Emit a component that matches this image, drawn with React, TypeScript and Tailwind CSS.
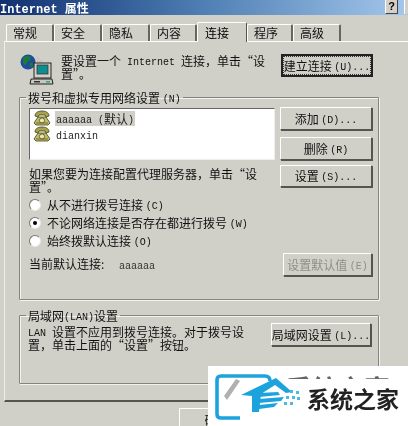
import React from "react";

const FONT = "[font-family:'Noto_Sans_CJK_SC','Liberation_Mono',monospace]";

function L({ children }: { children: React.ReactNode }) {
  return <span className="text-[10px] leading-[1px] align-[1px] [font-family:'Liberation_Mono',monospace]">{children}</span>;
}

function Tab({ label, w, active }: { label: string; w: string; active?: boolean }) {
  return (
    <div
      className={
        active
          ? `${w} h-[20px] mt-[1px] z-10 bg-[#d0d0c9] border-t border-l border-white border-r border-r-[#55554f] rounded-t-[2px] pl-[7px] pt-[3px] text-[12px] leading-[14px] text-black`
          : `${w} h-[17px] mt-[3px] bg-[#d0d0c9] border-t border-l border-white border-r-2 border-r-[#66665f] rounded-t-[2px] pl-[6px] pt-[1px] text-[12px] leading-[14px] text-[#111]`
      }
    >
      {label}
    </div>
  );
}

function Btn({
  children,
  className = "",
  dflt,
  disabled,
}: {
  children: React.ReactNode;
  className?: string;
  dflt?: boolean;
  disabled?: boolean;
}) {
  const raised =
    "border border-t-white border-l-white border-r-[#55554f] border-b-[#55554f] shadow-[1px_1px_0_#55554f]";
  return (
    <div
      className={`${className} flex items-center justify-center whitespace-nowrap text-[12px] leading-[14px] ${
        dflt ? "border-2 border-[#222]" : raised
      } ${disabled ? "text-[#8f8f88]" : "text-[#111]"} bg-[#d0d0c9]`}
    >
      {dflt ? (
        <div className="m-[1px] w-full h-full flex items-center justify-center border border-dotted border-[#333]">
          <span>{children}</span>
        </div>
      ) : (
        <span>{children}</span>
      )}
    </div>
  );
}

function Radio({ checked, children }: { checked?: boolean; children: React.ReactNode }) {
  return (
    <div className="h-[18px] flex items-center">
      <div className="w-[12px] h-[12px] mr-[6px] rounded-full bg-white border border-t-[#777] border-l-[#777] border-r-[#e8e8e4] border-b-[#e8e8e4] flex items-center justify-center">
        {checked && <div className="w-[4px] h-[4px] rounded-full bg-black" />}
      </div>
      <span className="text-[12px] leading-[14px] text-[#111]">{children}</span>
    </div>
  );
}

function PhoneIcon() {
  return (
    <svg width="18" height="16" viewBox="0 0 18 16" className="shrink-0">
      <path d="M2 6 C2 2 6 1 9 1 C12 1 16 2 16 6 L13 7 L12 5 L6 5 L5 7 Z" fill="#a8a24a" stroke="#3f3f20" strokeWidth="0.8" />
      <path d="M5 7 L13 7 L17 13 L15 15 L3 15 L1 13 Z" fill="#c4be62" stroke="#3f3f20" strokeWidth="0.8" />
      <circle cx="9" cy="10.5" r="2.6" fill="#e9e6b0" stroke="#4a4a24" strokeWidth="0.8" />
      <path d="M3 13 L15 13" stroke="#6f6a2e" strokeWidth="1" />
    </svg>
  );
}

function NetIcon() {
  return (
    <svg width="36" height="32" viewBox="0 0 36 32" className="shrink-0">
      <path d="M16 6 L22 8 M18 3 L24 9" stroke="#d9a0a0" strokeWidth="1" strokeDasharray="1 1" />
      <circle cx="9" cy="8" r="7.5" fill="#1c4f9c" />
      <path d="M4 4 C7 1 11 2 12 4 C11 7 9 6 8 9 C7 12 5 11 4 9 Z" fill="#1f7a3a" />
      <path d="M11 9 C14 8 15 10 14 12 C12 14 10 12 11 9 Z" fill="#1f7a3a" />
      <rect x="15" y="9" width="17" height="15" fill="#d4d0c8" stroke="#222" strokeWidth="1" />
      <rect x="18" y="11" width="11" height="9" fill="#0e8f8f" stroke="#333" strokeWidth="0.8" />
      <path d="M12 25 L33 25 L34 30 L11 30 Z" fill="#c8c8c0" stroke="#222" strokeWidth="1" />
      <rect x="15" y="27" width="6" height="1.5" fill="#333" />
      <rect x="27" y="27" width="4" height="1.5" fill="#2a8" />
    </svg>
  );
}

function Group({
  legend,
  legendClass,
  className,
  children,
}: {
  legend: React.ReactNode;
  legendClass: string;
  className: string;
  children: React.ReactNode;
}) {
  return (
    <fieldset
      className={`${className} border border-[#85857f] shadow-[1px_1px_0_#f2f2ee,inset_1px_1px_0_#f2f2ee] rounded-[1px]`}
    >
      <legend className={`${legendClass} px-[2px] text-[12px] leading-[13px] text-[#111]`}>{legend}</legend>
      {children}
    </fieldset>
  );
}

function WatermarkLogo() {
  return (
    <svg width="90" height="48" viewBox="0 0 90 48" className="shrink-0">
      <path d="M56 8 Q56 3 51 3 L7 3 Q3 3 3 7 L3 41 Q3 45 7 45 L26 45" fill="none" stroke="#1ca3de" strokeWidth="3.6" />
      <path d="M10 23 L22 6 L26 8 L13 27 Z" fill="#b0b0b0" />
      <path d="M27 22 L62 5 L78 19 L72 20 L61 12 L47 21 L45 39 L38 39 L38 23 Z" fill="#1ca3de" />
      <path d="M45 20 L64 19 L66 22 L45 24 Z M45 26 L70 24 L67 28 L45 30 Z M45 32 L64 30 L60 34 L45 36 Z" fill="#1ca3de" />
      <g fill="#4db8e6">
        <rect x="76" y="17" width="3" height="3" />
        <rect x="82" y="18" width="3" height="3" />
        <rect x="72" y="23" width="3" height="3" />
        <rect x="78" y="23" width="3" height="3" />
        <rect x="83" y="24" width="3" height="3" />
        <rect x="70" y="29" width="3" height="3" />
        <rect x="76" y="29" width="3" height="3" />
      </g>
    </svg>
  );
}

export default function App() {
  return (
    <div className={`${FONT} relative w-[408px] h-[426px] overflow-hidden bg-[#d0d0c9] flex flex-col blur-[0.35px]`}>
      {/* title bar */}
      <div className="h-[15px] shrink-0 flex items-center justify-between bg-gradient-to-r from-[#123070] via-[#4f7fb4] to-[#a4c8ec]">
        <div className="text-[12px] leading-[14px] font-bold text-white whitespace-nowrap">
          <span className="text-[12px] leading-[1px] [font-family:'Liberation_Mono',monospace]">Internet </span>属性
        </div>
        <div className="flex items-start gap-[6px] h-full">
          <div className="w-[13px] h-[14px] bg-[#d4d0c8] border-r border-b border-[#444] border-l border-l-white flex items-center justify-center text-[11px] leading-[11px] font-bold text-black [font-family:'Liberation_Sans',sans-serif]">
            ?
          </div>
          <div className="w-[4px] h-[14px] bg-[#d4d0c8] border-l border-l-white" />
        </div>
      </div>

      {/* tabs */}
      <div className="flex h-[26px] items-end pl-[6px] shrink-0 relative z-10">
        <div className="flex items-start h-[20px]">
          <Tab label="常规" w="w-[48px]" />
          <Tab label="安全" w="w-[48px]" />
          <Tab label="隐私" w="w-[48px]" />
          <Tab label="内容" w="w-[47px]" />
          <Tab label="连接" w="w-[50px]" active />
          <Tab label="程序" w="w-[46px]" />
          <Tab label="高级" w="w-[48px]" />
        </div>
      </div>

      {/* panel */}
      <div className="ml-[4px] -mr-[4px] h-[361px] shrink-0 border-t border-l border-t-white border-l-[#efefea] border-b-2 border-b-[#55554f] pl-[14px] pr-[20px]">
        <div className="flex h-[48px] pt-[12px]">
          <NetIcon />
          <div className="ml-[6px] w-[204px] text-[12px] leading-[13px] text-[#111] whitespace-nowrap">
            <div>要设置一个<L> Internet </L>连接，单击“设</div>
            <div>置”。</div>
          </div>
          <Btn className="ml-[16px] w-[92px] h-[23px]" dflt>
            建立连接 <L>(U)...</L>
          </Btn>
        </div>

        <Group legend={<>拨号和虚拟专用网络设置 <L>(N)</L></>} legendClass="-ml-[3px]" className="mt-[1px] w-[360px] h-[209px] pl-[9px] pr-[6px]">
          <div className="flex gap-[5px] mt-[4px]">
            <div className="w-[246px] h-[52px] shrink-0 bg-white border border-t-[#666] border-l-[#666] border-r-[#eee] border-b-[#eee] pl-[3px] pt-[1px]">
              <div className="flex items-center h-[16px]">
                <PhoneIcon />
                <span className="ml-[4px] pl-[1px] pr-[1px] bg-[#d0d0c9] text-[12px] leading-[15px] text-[#222] whitespace-nowrap">
                  <L>aaaaaa (</L>默认<L>)</L>
                </span>
              </div>
              <div className="flex items-center h-[16px]">
                <PhoneIcon />
                <span className="ml-[5px] text-[12px] leading-[15px] text-[#222]"><L>dianxin</L></span>
              </div>
            </div>
            <div className="flex flex-col -mt-[1px]">
              <Btn className="w-[92px] h-[23px]">添加 <L>(D)...</L></Btn>
              <Btn className="w-[92px] h-[23px] mt-[7px]">删除 <L>(R)</L></Btn>
              <Btn className="w-[92px] h-[22px] mt-[5px]">设置 <L>(S)...</L></Btn>
            </div>
          </div>
          <div className="-mt-[20px] text-[12px] leading-[13px] text-[#111] whitespace-nowrap">
            <div>如果您要为连接配置代理服务器，单击“设</div>
            <div>置”。</div>
          </div>
          <div className="mt-[3px]">
            <Radio>从不进行拨号连接 <L>(C)</L></Radio>
            <Radio checked>不论网络连接是否存在都进行拨号 <L>(W)</L></Radio>
            <Radio>始终拨默认连接 <L>(O)</L></Radio>
          </div>
          <div className="flex items-start mt-[3px]">
            <div className="mt-[4px] w-[90px] text-[12px] leading-[14px] text-[#111]">当前默认连接:</div>
            <div className="mt-[5px] w-[164px] text-[12px] leading-[14px] text-[#333]"><L>aaaaaa</L></div>
            <Btn className="w-[89px] h-[23px]" disabled>设置默认值 <L>(E)</L></Btn>
          </div>
        </Group>

        <Group legend={<>局域网<L>(LAN)</L>设置</>} legendClass="-ml-[2px]" className="mt-[9px] w-[360px] h-[75px] pl-[8px] pr-[6px]">
          <div className="flex items-start">
            <div className="w-[243px] mt-[3px] text-[12px] leading-[13px] text-[#111] whitespace-nowrap">
              <div><L>LAN </L>设置不应用到拨号连接。对于拨号设</div>
              <div>置，单击上面的“设置”按钮。</div>
            </div>
            <Btn className="w-[100px] h-[23px] mt-[1px] shrink-0">局域网设置 <L>(L)...</L></Btn>
          </div>
        </Group>
      </div>

      {/* bottom buttons */}
      <div className="flex pl-[179px] pt-[6px]">
        <Btn className="w-[75px] h-[23px]">确定</Btn>
      </div>

      {/* watermark overlay */}
      <div className="absolute left-[208px] top-[366px] w-[200px] h-[60px] bg-white flex items-start pl-[6px] pt-[7px]">
        <WatermarkLogo />
        <div className="ml-[3px] flex flex-col">
          <div className="h-[4px] mt-[2px] overflow-hidden text-[26px] leading-[26px] font-bold text-[#666] whitespace-nowrap [font-family:'Noto_Sans_CJK_SC',sans-serif] -ml-[21px] w-[110px]">
            系统之家
          </div>
          <div className="mt-[6px] text-[23px] leading-[26px] font-bold text-[#222] whitespace-nowrap [font-family:'Noto_Sans_CJK_SC',sans-serif]">
            系统之家
          </div>
        </div>
      </div>
    </div>
  );
}
